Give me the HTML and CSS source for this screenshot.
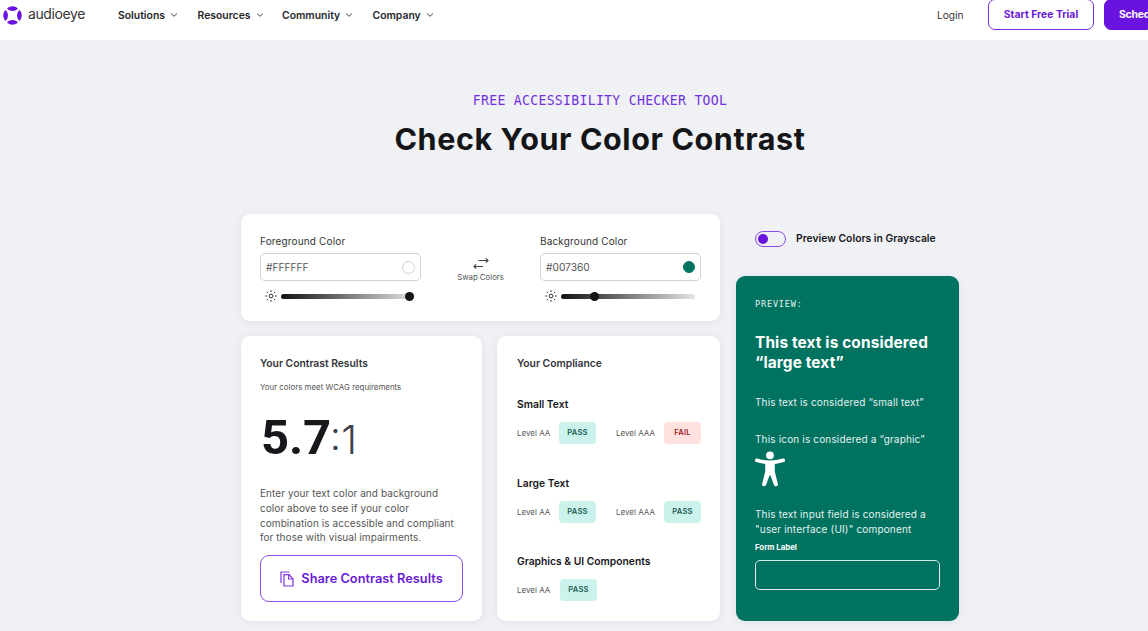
FILE: index.html
```
<!DOCTYPE html>
<html lang="en">
<head>
<meta charset="utf-8">
<title>Color Contrast Checker</title>
<link rel="stylesheet" href="styles.css">
</head>
<body>
<header class="header">
  <a class="logo">
    <svg class="logo-mark" viewBox="0 0 20 20"><path d="M4.300 2.300Q10-1.800 15.700 2.300Q14 5.200 10 5.200T4.300 2.300ZM4.300 17.700Q10 21.800 15.700 17.700Q14 14.800 10 14.800T4.300 17.700ZM2.300 4.300Q-1.800 10 2.300 15.700Q5.200 14 5.200 10T2.300 4.300ZM17.700 4.300Q21.800 10 17.700 15.700Q14.800 14 14.800 10T17.700 4.300Z"/></svg>
    <span class="logo-text">audioeye</span>
  </a>
  <nav class="nav">
    <a class="nav-item n1"><span>Solutions</span><svg class="chev" viewBox="0 0 8 6"><path d="M1 1.500L4 4.300L7 1.500"/></svg></a>
    <a class="nav-item n2"><span>Resources</span><svg class="chev" viewBox="0 0 8 6"><path d="M1 1.500L4 4.300L7 1.500"/></svg></a>
    <a class="nav-item n3"><span>Community</span><svg class="chev" viewBox="0 0 8 6"><path d="M1 1.500L4 4.300L7 1.500"/></svg></a>
    <a class="nav-item n4"><span>Company</span><svg class="chev" viewBox="0 0 8 6"><path d="M1 1.500L4 4.300L7 1.500"/></svg></a>
  </nav>
  <div class="actions">
    <a class="login">Login</a>
    <a class="btn trial">Start Free Trial</a>
    <a class="btn demo">Sched</a>
  </div>
</header>
<main class="main">
  <p class="eyebrow">FREE ACCESSIBILITY CHECKER TOOL</p>
  <h1 class="title">Check Your Color Contrast</h1>
  <div class="tool">
    <div class="left">
      <section class="card pickers">
        <div class="picker">
          <label class="label">Foreground Color</label>
          <div class="field"><span class="hex">#FFFFFF</span><i class="swatch white"></i></div>
          <div class="slider">
            <svg class="sun" viewBox="0 0 12 12"><circle cx="6" cy="6" r="1.900"/><path d="M6 .2V2M6 10V11.800M.2 6H2M10 6H11.800M1.900 1.900L3.100 3.100M8.900 8.900L10.100 10.100M1.900 10.100L3.100 8.900M8.900 3.100L10.100 1.900"/></svg>
            <div class="track"><i class="thumb end"></i></div>
          </div>
        </div>
        <div class="swap">
          <svg class="swap-icon" viewBox="0 0 16 13"><path d="M5.500 3.500H15M12.800 1.300L15 3.500L12.800 5.700M10 9.500H1M3.200 7.300L1 9.500L3.200 11.700"/></svg>
          <span class="swap-text">Swap Colors</span>
        </div>
        <div class="picker">
          <label class="label">Background Color</label>
          <div class="field"><span class="hex hex2">#007360</span><i class="swatch green"></i></div>
          <div class="slider">
            <svg class="sun" viewBox="0 0 12 12"><circle cx="6" cy="6" r="1.900"/><path d="M6 .2V2M6 10V11.800M.2 6H2M10 6H11.800M1.900 1.900L3.100 3.100M8.900 8.900L10.100 10.100M1.900 10.100L3.100 8.900M8.900 3.100L10.100 1.900"/></svg>
            <div class="track"><i class="thumb quarter"></i></div>
          </div>
        </div>
      </section>
      <div class="results-row">
        <section class="card results">
          <h2 class="card-title">Your Contrast Results</h2>
          <p class="meet">Your colors meet WCAG requirements</p>
          <p class="ratio"><strong class="ratio-main">5.7</strong><span class="ratio-one">:1</span></p>
          <p class="desc">Enter your text color and background<br>color above to see if your color<br>combination is accessible and compliant<br>for those with visual impairments.</p>
          <a class="share"><svg class="copy" viewBox="0 0 14 16"><path d="M1 12V1H9.500M4 3.700H9L13 7.700V15H4ZM8.700 3.700V8H13"/></svg><span>Share Contrast Results</span></a>
        </section>
        <section class="card compliance">
          <h2 class="card-title comp-title">Your Compliance</h2>
          <div class="level-group">
            <h3 class="group-title">Small Text</h3>
            <div class="levels"><span class="lv">Level AA</span><b class="tag">PASS</b><span class="lv aaa">Level AAA</span><b class="tag fail">FAIL</b></div>
          </div>
          <div class="level-group">
            <h3 class="group-title">Large Text</h3>
            <div class="levels"><span class="lv">Level AA</span><b class="tag">PASS</b><span class="lv aaa">Level AAA</span><b class="tag">PASS</b></div>
          </div>
          <div class="level-group">
            <h3 class="group-title">Graphics &amp; UI Components</h3>
            <div class="levels"><span class="lv lv-ui">Level AA</span><b class="tag">PASS</b></div>
          </div>
        </section>
      </div>
    </div>
    <aside class="right">
      <div class="gray-toggle"><span class="switch"><i class="knob"></i></span><span class="gray-text">Preview Colors in Grayscale</span></div>
      <section class="preview">
        <p class="pv-tag">PREVIEW:</p>
        <p class="pv-large">This text is considered<br>“large text”</p>
        <p class="pv-text pv-small">This text is considered “small text”</p>
        <p class="pv-text pv-graphic">This icon is considered a “graphic”</p>
        <svg class="person" viewBox="0 0 30 36"><circle cx="15" cy="4.300" r="3.900"/><path d="M1.800 9.300Q15 13.500 28.200 9.300M15 12.500V22" class="limb"/><path d="M10.200 11H19.800V20.500L23 33.400Q22.500 35.600 20.300 35.200Q19.200 35 18.800 33.500L15.500 24.500H14.500L11.200 33.500Q10.700 35.300 9 35.200Q7 35 7 33.400L10.200 20.500Z"/></svg>
        <p class="pv-text pv-field">This text input field is considered a<br>"user interface (UI)" component</p>
        <label class="pv-label">Form Label</label>
        <div class="pv-input"></div>
      </section>
    </aside>
  </div>
</main>
</body>
</html>
```
FILE: styles.css
```
* { box-sizing: border-box; margin: 0; padding: 0; }
body { height: 631px; overflow: hidden; background: #f0f1f5; font-family: Inter, "Liberation Sans", sans-serif; color: #17181c; white-space: nowrap; }
svg { display: block; flex: none; }

.header { display: flex; height: 40px; background: #fff; padding-left: 3px; }
.logo { display: flex; align-items: center; height: 30px; width: 115px; gap: 6px; }
.logo-mark { width: 19px; height: 19px; fill: #6a13df; }
.logo-text { font-size: 14px; line-height: 16px; margin-top: -2px; letter-spacing: -.4px; color: #333; }
.nav { display: flex; height: 30px; }
.nav-item { display: flex; align-items: center; gap: 5px; font-size: 10.400px; font-weight: 600; color: #26282c; }
.n1 { width: 79.500px; } .n2 { width: 84.500px; } .n3 { width: 90.500px; }
.chev { width: 8px; height: 6px; fill: none; stroke: #444; stroke-width: 1; }
.actions { display: flex; margin-left: auto; height: 30px; }
.login { width: 51px; font-size: 10.200px; line-height: 31px; color: #333; }
.btn { height: 31px; margin-top: -1px; border: 1px solid #7b2de0; border-radius: 7px; font-size: 10.400px; font-weight: 700; line-height: 30px; text-align: center; color: #6a1bd6; }
.trial { width: 106px; margin-right: 10px; }
.demo { width: 44px; padding-left: 14px; background: #6a13df; border-color: #6a13df; color: #fff; text-align: left; border-radius: 7px 0 0 7px; letter-spacing: -.2px; }

.main { width: 718px; margin-left: 241px; padding-top: 51px; }
.eyebrow { font-family: "DejaVu Sans Mono", monospace; font-size: 13.200px; letter-spacing: .27px; line-height: 20px; text-align: center; color: #7232df; }
.title { font-size: 30.500px; font-weight: 650; line-height: 40px; margin-top: 8px; letter-spacing: .6px; text-align: center; color: #141517; }
.tool { display: flex; gap: 16px; margin-top: 55px; }
.left { width: 479px; }
.card { background: #fff; border-radius: 9px; box-shadow: 0 1px 9px rgba(30,25,60,.07); }
.pickers { display: flex; height: 107px; padding: 19px 19px 0; }
.picker { width: 161px; }
.label { display: block; font-size: 10px; letter-spacing: .15px; line-height: 16px; color: #333; }
.field { display: flex; align-items: center; justify-content: space-between; height: 28px; margin-top: 4px; padding: 0 5px; border: 1px solid #cfd0d8; border-radius: 5px; }
.hex { font-size: 10.200px; margin-top: -1px; color: #555; }
.swatch { width: 13px; height: 13px; border-radius: 50%; border: 1px solid #cfd0d8; }
.green { width: 12px; height: 12px; background: #007360; border-color: #007360; }
.slider { display: flex; align-items: center; height: 16px; margin-top: 7px; padding-left: 5px; gap: 4px; }
.sun { width: 12px; height: 12px; fill: none; stroke: #333; stroke-width: 1; }
.track { position: relative; width: 134px; height: 5px; border-radius: 3px; background: linear-gradient(90deg, #111, #e5e4ea); }
.thumb { position: absolute; top: -2px; width: 9px; height: 9px; border-radius: 50%; background: #141517; }
.end { left: 124px; } .quarter { left: 29px; }
.swap { display: flex; flex-direction: column; align-items: center; width: 119px; padding-top: 24px; }
.swap-icon { width: 16px; height: 13px; fill: none; stroke: #444; stroke-width: 1.200; }
.swap-text { font-size: 7.800px; line-height: 12px; margin-top: 1px; color: #555; }

.results-row { display: flex; gap: 15px; margin-top: 15px; }
.results { width: 241px; height: 285px; padding: 19px 19px 0; }
.compliance { width: 223px; height: 285px; padding: 19px 0 0 20px; }
.card-title { font-size: 10.300px; font-weight: 600; line-height: 16px; color: #34363b; }
.meet { font-size: 7.900px; line-height: 12px; margin-top: 10px; color: #555; }
.ratio { display: flex; align-items: baseline; height: 58px; margin-top: 16px; line-height: 58px; padding-left: 1px; }
.ratio-main { font-family: Roboto, sans-serif; font-size: 49px; font-weight: 700; letter-spacing: -.2px; }
.ratio-one { font-size: 40px; font-weight: 300; margin-left: -1px; color: #3d424d; }
.desc { font-size: 10px; letter-spacing: .07px; line-height: 14.800px; margin-top: 19px; color: #555; }
.share { display: flex; align-items: center; justify-content: center; gap: 7px; width: 203px; height: 47px; margin-top: 10px; border: 1px solid #8a4be6; border-radius: 9px; font-size: 12.800px; font-weight: 600; color: #6a1bd6; }
.copy { width: 14px; height: 16px; fill: none; stroke: #7a33e0; stroke-width: 1.200; }
.level-group { height: 78.500px; }
.comp-title { margin-bottom: 25px; }
.group-title { font-size: 10.300px; font-weight: 600; line-height: 16px; }
.levels { display: flex; align-items: center; height: 22px; margin-top: 10px; }
.lv { width: 42px; font-size: 8px; color: #555; }
.aaa { width: 48px; margin-left: 20px; }
.lv-ui { width: 43px; }
.tag { width: 37px; height: 22px; border-radius: 4px; background: #ccf2ec; color: #185950; font-size: 7.500px; font-weight: 600; line-height: 22px; text-align: center; letter-spacing: .3px; }
.fail { background: #ffe1e0; color: #9b2322; }

.right { width: 223px; }
.gray-toggle { display: flex; align-items: center; height: 16px; margin: 17px 0 29px 19px; gap: 10px; }
.switch { display: flex; align-items: center; width: 31px; height: 16px; padding-left: 2px; border: 1px solid #8a4be6; border-radius: 8px; }
.knob { width: 10px; height: 10px; border-radius: 50%; background: #6a13df; }
.gray-text { font-size: 10.350px; font-weight: 600; margin-top: -2px; }
.preview { height: 345px; padding: 20px 19px 0; border-radius: 9px; background: #007360; color: #fff; box-shadow: 0 1px 9px rgba(30,25,60,.07); }
.pv-tag { font-family: "DejaVu Sans Mono", monospace; font-size: 8.500px; line-height: 16px; letter-spacing: .85px; color: #e2f0ed; }
.pv-large { font-size: 15.400px; font-weight: 650; line-height: 20px; margin-top: 21px; letter-spacing: .13px; }
.pv-text { font-size: 10px; letter-spacing: .16px; line-height: 15px; color: #e6f2f0; }
.pv-small { margin-top: 22px; } .pv-graphic { margin-top: 22px; }
.person { width: 30px; height: 36px; margin-top: 4px; fill: #fff; }
.limb { fill: none; stroke: #fff; stroke-width: 3.600; stroke-linecap: round; }
.pv-field { margin-top: 20px; }
.pv-label { display: block; font-size: 7.800px; font-weight: 700; line-height: 12px; margin-top: 4px; }
.pv-input { height: 30px; margin-top: 7px; border: 1px solid #dcebe8; border-radius: 5px; }
```
